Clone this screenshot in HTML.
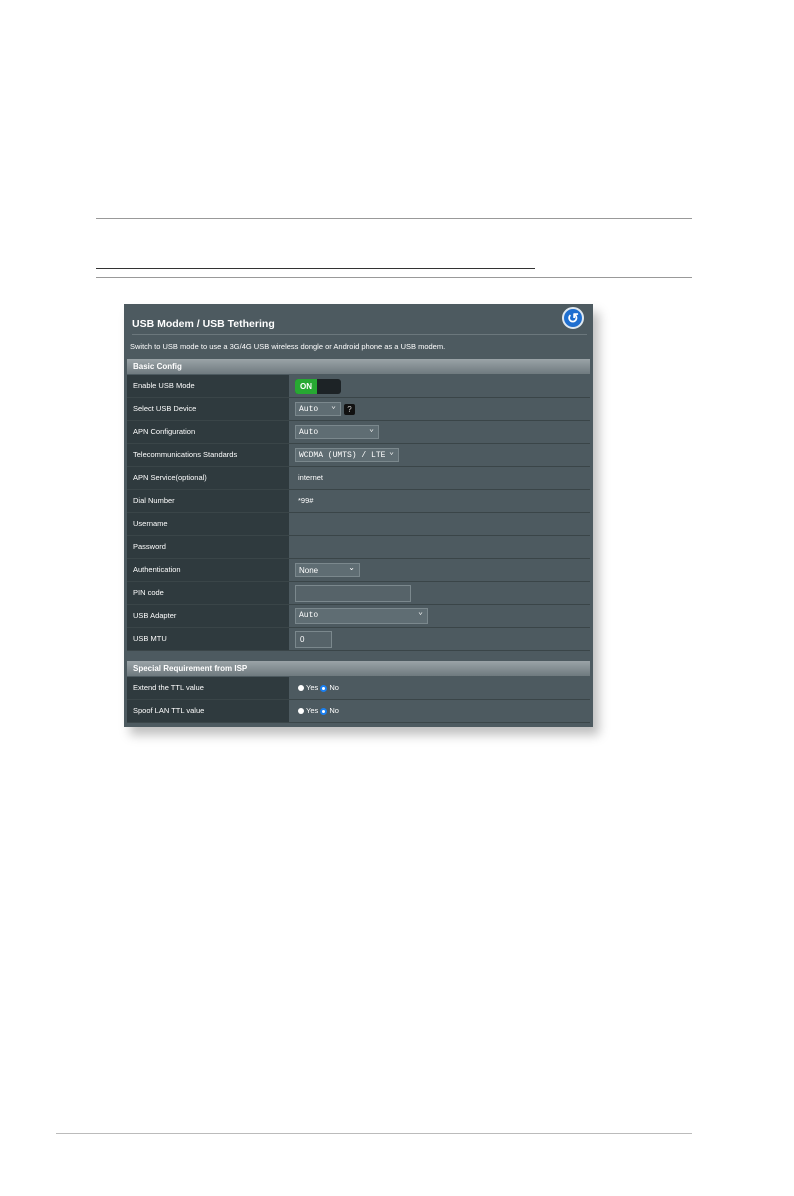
<!DOCTYPE html><html><head><style>
body{margin:0;width:794px;height:1196px;background:#fff;position:relative;font-family:"Liberation Sans",sans-serif;overflow:hidden}
.l{position:absolute;background:#999;height:1px}
#p{position:absolute;left:124px;top:304px;width:469px;height:423px;background:#4d5a60;box-shadow:6px 8px 10px rgba(0,0,0,.25)}
.t{position:absolute;color:#fff;font-size:8px}
.hdr{position:absolute;left:3px;width:463px;height:15px;background:linear-gradient(#9aa3a7,#6f7a7f);color:#fff;font-weight:bold;font-size:8px;line-height:15px;text-indent:6px}
.row{position:absolute;left:3px;width:463px;height:22px;border-bottom:1px solid #3a4548}
.row .k{position:absolute;left:0;top:0;width:162px;height:22px;background:#2f3a3e;color:#fff;font-size:7.5px;line-height:22px;text-indent:6px}
.row .v{position:absolute;left:165px;top:0;height:22px;color:#fff;font-size:7.5px;line-height:22px}
.sel{position:absolute;top:4px;height:14px;background:#5f6d73;border:1px solid #7b888d;color:#fff;font-family:"Liberation Mono",monospace;font-size:8px;line-height:14px;text-indent:3px;box-sizing:border-box}
.sel:after{content:"⌄";position:absolute;right:4px;top:-3px}
.sel.nod:after{content:none}
.rad{display:inline-block;width:6px;height:6px;border-radius:50%;background:#fff;vertical-align:middle;margin-right:2px}
</style></head><body>
<div class="l" style="left:96px;top:218px;width:596px"></div>
<div class="l" style="left:96px;top:268px;width:439px;background:#333"></div>
<div class="l" style="left:96px;top:277px;width:596px"></div>
<div class="l" style="left:56px;top:1133px;width:636px;background:#bbb"></div>
<div id="p">
<div class="t" style="left:8px;top:14px;font-size:10.5px;font-weight:bold">USB Modem / USB Tethering</div>
<div style="position:absolute;left:438px;top:3px;width:22px;height:22px;border-radius:50%;background:#1f6fd0;border:2px solid #dfe8f0;box-sizing:border-box;color:#fff;font-size:14px;font-weight:bold;text-align:center;line-height:18px">↺</div>
<div style="position:absolute;left:8px;top:30px;width:455px;height:1px;background:#6b777c"></div>
<div class="t" style="left:6px;top:38px;font-size:7.5px">Switch to USB mode to use a 3G/4G USB wireless dongle or Android phone as a USB modem.</div>
<div class="hdr" style="top:55px">Basic Config</div>
<div class="row" style="top:71px"><div class="k">Enable USB Mode</div><div class="v"><div style="position:absolute;top:4px;left:3px;width:46px;height:15px;border-radius:3px;background:#1d2326"><div style="width:22px;height:15px;background:#27a832;border-radius:3px 0 0 3px;color:#fff;font-weight:bold;font-size:8px;line-height:15px;text-align:center">ON</div></div></div></div>
<div class="row" style="top:94px"><div class="k">Select USB Device</div><div class="v"><div class="sel" style="left:3px;width:46px">Auto</div><div style="position:absolute;left:52px;top:6px;width:11px;height:11px;background:#111;border-radius:2px;color:#ccc;font-size:8px;line-height:11px;text-align:center">?</div></div></div>
<div class="row" style="top:117px"><div class="k">APN Configuration</div><div class="v"><div class="sel" style="left:3px;width:84px">Auto</div></div></div>
<div class="row" style="top:140px"><div class="k">Telecommunications Standards</div><div class="v"><div class="sel" style="left:3px;width:104px">WCDMA (UMTS) / LTE</div></div></div>
<div class="row" style="top:163px"><div class="k">APN Service(optional)</div><div class="v" style="left:171px">internet</div></div>
<div class="row" style="top:186px"><div class="k">Dial Number</div><div class="v" style="left:171px">*99#</div></div>
<div class="row" style="top:209px"><div class="k">Username</div></div>
<div class="row" style="top:232px"><div class="k">Password</div></div>
<div class="row" style="top:255px"><div class="k">Authentication</div><div class="v"><div class="sel" style="left:3px;width:65px;font-family:'Liberation Sans'">None</div></div></div>
<div class="row" style="top:278px"><div class="k">PIN code</div><div class="v"><div class="sel nod" style="left:3px;width:116px;height:17px;top:3px;background:#566369"></div></div></div>
<div class="row" style="top:301px"><div class="k">USB Adapter</div><div class="v"><div class="sel" style="left:3px;width:133px;height:16px;top:3px">Auto</div></div></div>
<div class="row" style="top:324px"><div class="k">USB MTU</div><div class="v"><div style="position:absolute;left:3px;top:3px;width:37px;height:17px;background:#566369;border:1px solid #7b888d;box-sizing:border-box;font-size:8px;line-height:15px;text-indent:4px">0</div></div></div>
<div class="hdr" style="top:357px">Special Requirement from ISP</div>
<div class="row" style="top:373px"><div class="k">Extend the TTL value</div><div class="v" style="left:171px"><span class="rad"></span>Yes <span class="rad" style="background:#fff;border:2px solid #1a7ff0;width:3px;height:3px"></span>No</div></div>
<div class="row" style="top:396px"><div class="k">Spoof LAN TTL value</div><div class="v" style="left:171px"><span class="rad"></span>Yes <span class="rad" style="background:#fff;border:2px solid #1a7ff0;width:3px;height:3px"></span>No</div></div>
</div>
</body></html>
